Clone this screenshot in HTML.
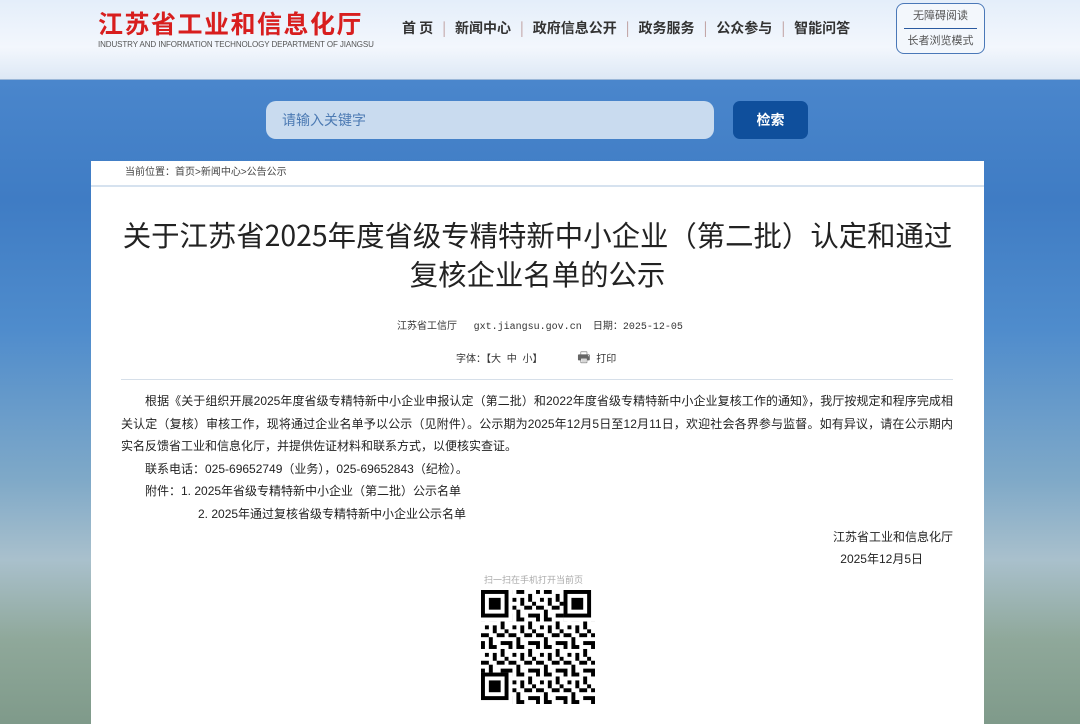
<!DOCTYPE html>
<html><head><meta charset="utf-8">
<style>
*{margin:0;padding:0;box-sizing:border-box}
html,body{width:1080px;height:724px;overflow:hidden}
body{font-family:"Liberation Sans","Noto Sans CJK SC",sans-serif;position:relative;
background:linear-gradient(180deg,#4a86cc 80px,#3f7cc4 200px,#4f8ccc 330px,#7fa9c8 480px,#a9c0cc 560px,#8fa89a 640px,#7f9a8a 724px);}
.top{position:absolute;left:0;top:0;width:1080px;height:80px;background:linear-gradient(180deg,#e4eefa,#f3f7fd 60%,#dde8f5);border-bottom:1px solid #9bb7d8}
.logo{position:absolute;left:98px;top:5px;color:#d81e1e;font-size:25px;font-weight:bold;letter-spacing:1.5px;font-family:"Noto Sans CJK SC",sans-serif}
.en{position:absolute;left:98px;top:40px;font-size:8px;color:#555;letter-spacing:-0.1px}
.nav{position:absolute;left:402px;top:18px;font-size:14px;font-weight:bold;color:#333;font-family:"Noto Sans CJK SC",sans-serif}
.nav span.s{color:#b99;font-weight:normal;margin:0 9px}
.acc{position:absolute;left:896px;top:3px;width:89px;height:51px;border:1px solid #4a78b8;border-radius:8px;background:#f3f7fc;font-size:11px;color:#555;text-align:center}
.acc div{height:25px;line-height:24px}
.acc div:first-child{border-bottom:1px solid #2a5aa0;margin:0 7px}
.search{position:absolute;left:266px;top:101px;width:448px;height:38px;border-radius:10px;background:#c9dbef;color:#4c7ab3;font-size:14px;line-height:38px;padding-left:16px}
.btn{position:absolute;left:733px;top:101px;width:75px;height:38px;border-radius:7px;background:#0f4f9c;color:#fff;font-weight:bold;font-size:14px;line-height:38px;text-align:center}
.box{position:absolute;left:91px;top:161px;width:893px;height:563px;background:#fff}
.crumb{height:26px;border-bottom:2px solid #d6e2ef;font-size:10px;line-height:24px;padding-left:34px;color:#444}
h1{position:absolute;left:0;width:893px;top:54px;text-align:center;font-size:28.4px;font-weight:normal;line-height:39px;color:#222;font-family:"Noto Sans CJK SC",sans-serif}
.meta{position:absolute;top:156px;left:306px;font-size:10px;color:#333}
.meta2{position:absolute;top:186px;left:365px;font-size:10px;color:#333;word-spacing:3px}
.hr{position:absolute;left:30px;top:218px;width:832px;border-top:1px solid #d6dfe9}
.body{position:absolute;left:30px;top:229px;width:832px;font-size:12px;line-height:22.6px;color:#222}
.body p{text-indent:24px;text-align:justify}
.body p.r{text-align:right;text-indent:0}
.qrt{position:absolute;left:393px;top:412px;font-size:9px;color:#aaa}
.qr{position:absolute;left:390px;top:429px}
</style></head><body>
<div class="top">
<div class="logo">江苏省工业和信息化厅</div>
<div class="en">INDUSTRY AND INFORMATION TECHNOLOGY DEPARTMENT OF JIANGSU</div>
<div class="nav">首 页<span class="s">|</span>新闻中心<span class="s">|</span>政府信息公开<span class="s">|</span>政务服务<span class="s">|</span>公众参与<span class="s">|</span>智能问答</div>
<div class="acc"><div>无障碍阅读</div><div>长者浏览模式</div></div>
</div>
<div class="search">请输入关键字</div>
<div class="btn">检索</div>
<div class="box">
<div class="crumb">当前位置：首页&gt;新闻中心&gt;公告公示</div>
<h1>关于江苏省2025年度省级专精特新中小企业（第二批）认定和通过<br>复核企业名单的公示</h1>
<div class="meta">江苏省工信厅 &nbsp;&nbsp;&nbsp;&nbsp;&nbsp;<span style="font-family:'Liberation Mono',monospace">gxt.jiangsu.gov.cn</span> &nbsp;&nbsp;&nbsp;日期：<span style="font-family:'Liberation Mono',monospace">2025-12-05</span></div>
<div class="meta2">字体：【大 中 小】 &nbsp;&nbsp;&nbsp;&nbsp;&nbsp;<span style="color:#666;font-size:14px">🖶</span> 打印</div>
<div class="hr"></div>
<div class="body">
<p>根据《关于组织开展2025年度省级专精特新中小企业申报认定（第二批）和2022年度省级专精特新中小企业复核工作的通知》，我厅按规定和程序完成相关认定（复核）审核工作，现将通过企业名单予以公示（见附件）。公示期为2025年12月5日至12月11日，欢迎社会各界参与监督。如有异议，请在公示期内实名反馈省工业和信息化厅，并提供佐证材料和联系方式，以便核实查证。</p>
<p>联系电话：025-69652749（业务），025-69652843（纪检）。</p>
<p>附件：1. 2025年省级专精特新中小企业（第二批）公示名单</p>
<p style="padding-left:53px">2. 2025年通过复核省级专精特新中小企业公示名单</p>
<p class="r">江苏省工业和信息化厅</p>
<p class="r" style="padding-right:30px">2025年12月5日</p>
</div>
<div class="qrt">扫一扫在手机打开当前页</div>
<svg class="qr" width="114" height="114" viewBox="0 0 29 29">
<defs><pattern id="p" width="7" height="7" patternUnits="userSpaceOnUse">
<rect x="0" y="0" width="1" height="1"/><rect x="2" y="0" width="2" height="1"/><rect x="5" y="1" width="1" height="2"/><rect x="1" y="2" width="1" height="1"/><rect x="3" y="2" width="1" height="2"/><rect x="0" y="4" width="2" height="1"/><rect x="4" y="4" width="2" height="1"/><rect x="6" y="3" width="1" height="1"/><rect x="2" y="5" width="1" height="2"/><rect x="5" y="6" width="2" height="1"/><rect x="0" y="6" width="1" height="1"/></pattern></defs>
<rect width="29" height="29" fill="url(#p)"/>
<g fill="#fff"><rect x="0" y="0" width="8" height="8"/><rect x="21" y="0" width="8" height="8"/><rect x="0" y="21" width="8" height="8"/></g>
<g fill="none" stroke="#000"><rect x="0.5" y="0.5" width="6" height="6"/><rect x="21.5" y="0.5" width="6" height="6"/><rect x="0.5" y="21.5" width="6" height="6"/></g>
<rect x="2" y="2" width="3" height="3"/><rect x="23" y="2" width="3" height="3"/><rect x="2" y="23" width="3" height="3"/>
</svg>
</div>
</body></html>
